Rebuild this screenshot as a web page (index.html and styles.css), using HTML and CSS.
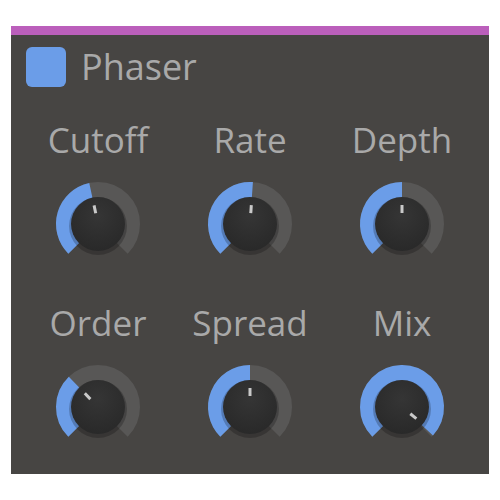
FILE: index.html
```html
<!DOCTYPE html>
<html>
<head>
<meta charset="utf-8">
<link rel="stylesheet" href="styles.css">
</head>
<body>
<svg class="defs" width="0" height="0">
  <defs>
    <radialGradient id="knobfill" cx="50%" cy="35%" r="65%">
      <stop offset="0%" stop-color="#353535"/>
      <stop offset="100%" stop-color="#292929"/>
    </radialGradient>
  </defs>
</svg>
<div class="panel">
  <div class="header">
    <span class="toggle"></span>
    <span class="title">Phaser</span>
  </div>
  <div class="grid">
    <div class="cell">
      <div class="label">Cutoff</div>
      <svg class="knob" viewBox="0 0 90 90" width="90" height="90">
        <path class="track" d="M20.96 69.04 A34 34 0 1 1 69.04 69.04"/>
        <path class="value" d="M20.96 69.04 A34 34 0 0 1 37.93 11.74"/>
        <circle class="shadow" cx="45" cy="47" r="29"/>
        <circle class="body" cx="45" cy="45" r="27"/>
        <line class="pointer" x1="42.71" y1="34.24" x2="41.05" y2="26.42"/>
      </svg>
    </div>
    <div class="cell">
      <div class="label">Rate</div>
      <svg class="knob" viewBox="0 0 90 90" width="90" height="90">
        <path class="track" d="M20.96 69.04 A34 34 0 1 1 69.04 69.04"/>
        <path class="value" d="M20.96 69.04 A34 34 0 0 1 47.37 11.08"/>
        <circle class="shadow" cx="45" cy="47" r="29"/>
        <circle class="body" cx="45" cy="45" r="27"/>
        <line class="pointer" x1="45.77" y1="34.03" x2="46.33" y2="26.05"/>
      </svg>
    </div>
    <div class="cell">
      <div class="label">Depth</div>
      <svg class="knob" viewBox="0 0 90 90" width="90" height="90">
        <path class="track" d="M20.96 69.04 A34 34 0 1 1 69.04 69.04"/>
        <path class="value" d="M20.96 69.04 A34 34 0 0 1 45 11"/>
        <circle class="shadow" cx="45" cy="47" r="29"/>
        <circle class="body" cx="45" cy="45" r="27"/>
        <line class="pointer" x1="45" y1="34" x2="45" y2="26"/>
      </svg>
    </div>
    <div class="cell">
      <div class="label">Order</div>
      <svg class="knob" viewBox="0 0 90 90" width="90" height="90">
        <path class="track" d="M20.96 69.04 A34 34 0 1 1 69.04 69.04"/>
        <path class="value" d="M20.96 69.04 A34 34 0 0 1 21.38 20.54"/>
        <circle class="shadow" cx="45" cy="47" r="29"/>
        <circle class="body" cx="45" cy="45" r="27"/>
        <line class="pointer" x1="37.36" y1="37.09" x2="31.80" y2="31.33"/>
      </svg>
    </div>
    <div class="cell">
      <div class="label">Spread</div>
      <svg class="knob" viewBox="0 0 90 90" width="90" height="90">
        <path class="track" d="M20.96 69.04 A34 34 0 1 1 69.04 69.04"/>
        <path class="value" d="M20.96 69.04 A34 34 0 0 1 45 11"/>
        <circle class="shadow" cx="45" cy="47" r="29"/>
        <circle class="body" cx="45" cy="45" r="27"/>
        <line class="pointer" x1="45" y1="34" x2="45" y2="26"/>
      </svg>
    </div>
    <div class="cell">
      <div class="label">Mix</div>
      <svg class="knob" viewBox="0 0 90 90" width="90" height="90">
        <path class="track" d="M20.96 69.04 A34 34 0 1 1 69.04 69.04"/>
        <path class="value" d="M20.96 69.04 A34 34 0 1 1 70.05 68.0"/>
        <circle class="shadow" cx="45" cy="47" r="29"/>
        <circle class="body" cx="45" cy="45" r="27"/>
        <line class="pointer" x1="53.31" y1="51.73" x2="59.37" y2="56.63"/>
      </svg>
    </div>
  </div>
</div>
</body>
</html>
```
FILE: styles.css
```css
html, body {
  margin: 0;
  padding: 0;
  background: #ffffff;
}

body {
  padding: 26px 11px 0 11px;
}

.defs {
  position: absolute;
  width: 0;
  height: 0;
}

.panel {
  background: #474543;
  border-top: 9px solid #bb5fbb;
  padding: 12px 11px 22px 11px;
  font-family: "Open Sans", "Noto Sans", sans-serif;
  color: #a9a9a9;
}

.header {
  display: flex;
  align-items: center;
  height: 40px;
  padding-left: 4px;
}

.toggle {
  width: 40px;
  height: 40px;
  border-radius: 6px;
  background: #6b9de8;
  flex: none;
}

.title {
  margin-left: 15px;
  font-size: 36px;
  line-height: 40px;
}

.grid {
  display: grid;
  grid-template-columns: repeat(3, 1fr);
  row-gap: 34px;
  margin-top: 33px;
}

.cell {
  display: flex;
  flex-direction: column;
  align-items: center;
}

.label {
  font-size: 35px;
  line-height: 40px;
  height: 40px;
}

.knob {
  display: block;
  margin-top: 19px;
}

.track {
  fill: none;
  stroke: #585756;
  stroke-width: 16;
}

.value {
  fill: none;
  stroke: #6b9de8;
  stroke-width: 16;
}

.shadow {
  fill: #000000;
  opacity: 0.22;
}

.body {
  fill: url(#knobfill);
}

.pointer {
  stroke: #c9c9c9;
  stroke-width: 3;
  stroke-linecap: butt;
}
```
